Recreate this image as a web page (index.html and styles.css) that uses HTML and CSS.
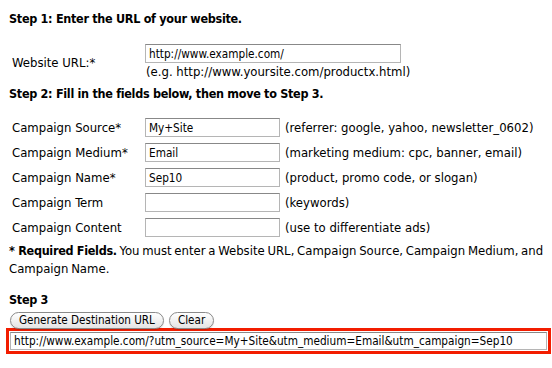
FILE: index.html
```html
<!DOCTYPE html>
<html lang="en">
<head>
    <meta charset="UTF-8">
    <title>URL Builder</title>
    <link rel="stylesheet" href="styles.css">
</head>
<body>
    <form class="builder">
        <h3 class="step">Step 1: Enter the URL of your website.</h3>

        <div class="url-row">
            <label class="field-label" for="url">Website URL:*</label>
            <div class="url-cell">
                <input type="text" id="url" class="url-input" value="http://www.example.com/">
                <div class="url-hint">(e.g. http://www.yoursite.com/productx.html)</div>
            </div>
        </div>

        <h3 class="step">Step 2: Fill in the fields below, then move to Step 3.</h3>

        <div class="fields">
            <label class="field-label" for="source">Campaign Source*</label>
            <input type="text" id="source" class="field-input" value="My+Site">
            <span class="hint">(referrer: google, yahoo, newsletter_0602)</span>

            <label class="field-label" for="medium">Campaign Medium*</label>
            <input type="text" id="medium" class="field-input" value="Email">
            <span class="hint">(marketing medium: cpc, banner, email)</span>

            <label class="field-label" for="name">Campaign Name*</label>
            <input type="text" id="name" class="field-input" value="Sep10">
            <span class="hint">(product, promo code, or slogan)</span>

            <label class="field-label" for="term">Campaign Term</label>
            <input type="text" id="term" class="field-input">
            <span class="hint">(keywords)</span>

            <label class="field-label" for="content">Campaign Content</label>
            <input type="text" id="content" class="field-input">
            <span class="hint">(use to differentiate ads)</span>
        </div>

        <p class="required"><b>* Required Fields.</b> You must enter a Website URL, Campaign Source, Campaign Medium, and Campaign Name.</p>

        <h3 class="step step-3">Step 3</h3>
        <div class="buttons">
            <button type="button">Generate Destination URL</button>
            <button type="button">Clear</button>
        </div>
        <div class="result">
            <input type="text" class="result-input" value="http://www.example.com/?utm_source=My+Site&amp;utm_medium=Email&amp;utm_campaign=Sep10">
        </div>
    </form>
</body>
</html>
```

FILE: styles.css
```css
body {
    font-family: "DejaVu Sans Condensed", "DejaVu Sans", sans-serif;
    font-size: 13px;
    color: #000;
    background-color: #fff;
    margin: 0;
    padding: 11px 0 0 9px;
}

b,
.step {
    font-size: 12.5px;
    font-weight: bold;
    letter-spacing: -0.3px;
}

.step {
    margin: 0;
    line-height: 16px;
}

.url-row {
    display: flex;
    align-items: center;
    margin: 17px 0 5px;
}

.field-label {
    width: 133px;
    padding-left: 3px;
    flex-shrink: 0;
}

.url-cell {
    display: flex;
    flex-direction: column;
}

input {
    font-family: "DejaVu Sans Condensed", "DejaVu Sans", sans-serif;
    font-size: 11.7px;
    height: 19px;
    box-sizing: border-box;
    padding: 1px 3px;
    border: 1px solid #b5b5b5;
    border-top-color: #888;
    margin: 0;
}

.url-input {
    width: 256px;
}

.url-hint {
    line-height: 18px;
    padding-left: 1px;
}

.fields {
    display: grid;
    grid-template-columns: 136px 135px auto;
    row-gap: 6px;
    align-items: center;
    margin-top: 16px;
}

.fields .field-label {
    width: auto;
}

.field-input {
    width: 135px;
}

.hint {
    margin-left: 5px;
}

.required {
    margin: 5px 0 0;
    line-height: 18px;
    word-spacing: -1px;
}

.required b {
    word-spacing: 0;
}

.step-3 {
    margin-top: 14px;
}

.buttons {
    display: flex;
    gap: 5px;
    margin: 4px 0 0 1px;
}

button {
    font-family: "DejaVu Sans Condensed", "DejaVu Sans", sans-serif;
    font-size: 11.6px;
    height: 17px;
    padding: 0 8px;
    margin: 0;
    border: 1px solid #8a8a8a;
    border-radius: 9px;
    background: linear-gradient(#ffffff, #e4e4e4);
    box-shadow: 0 1px 1px rgba(0, 0, 0, 0.15);
    color: #000;
    line-height: 15px;
}

.result {
    border: 3px solid #f21d00;
    padding: 1px;
    margin: -1px 1px 0 -3px;
    display: flex;
}

.result-input {
    flex: 1;
    height: 18px;
}
```
